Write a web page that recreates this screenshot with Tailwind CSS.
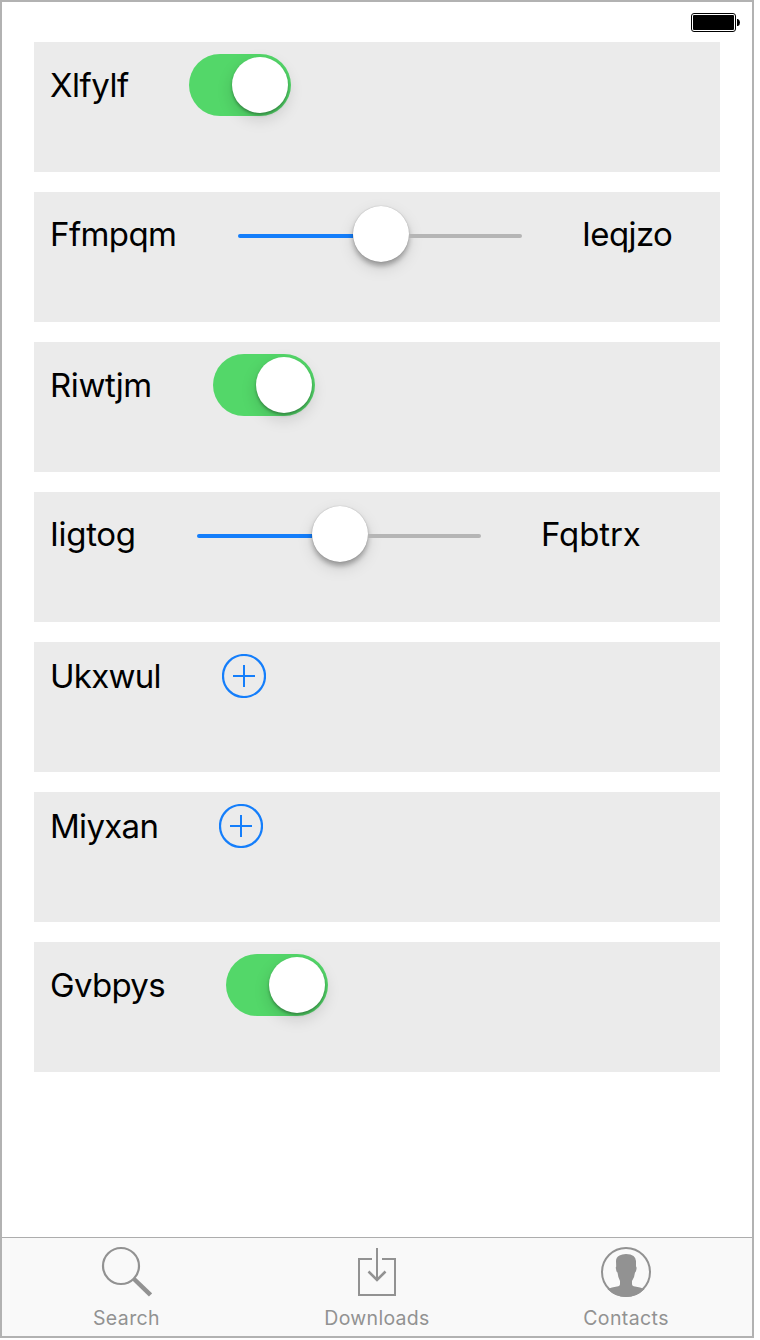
<!DOCTYPE html>
<html lang="en">
<head>
<meta charset="utf-8">
<title>Controls</title>
<script src="https://cdn.jsdelivr.net/npm/@tailwindcss/browser@4"></script>
</head>
<body class="bg-white text-black font-['Inter','Liberation_Sans',sans-serif]">
<div class="w-[754px] h-[1338px] border-2 border-[#b2b2b2] bg-white flex flex-col overflow-hidden">
  <header class="h-10 shrink-0 flex justify-end pt-[11px] pr-3">
    <svg width="49" height="19" viewBox="0 0 49 19"><rect x=".5" y=".5" width="44" height="18" rx="2.5" fill="#fff" stroke="#000"/><rect x="2" y="2" width="41" height="15" rx="1" fill="#000"/><path d="M46 6h1q2 1 2 3.500t-2 3.500h-1z" fill="#000"/></svg>
  </header>
  <main class="flex-1 flex flex-col gap-5 px-8 text-[33px] leading-[40px] whitespace-nowrap">
    <section class="h-[130px] w-[686px] bg-[#ebebeb] pl-4 pt-3">
      <div class="flex items-center h-[62px]">
        <span class="w-[139px]"><span class="tracking-[-0.5px]">Xlfylf</span></span>
        <div class="w-[102px] h-[62px] rounded-full bg-[#53d769] flex justify-end p-[3px]"><div class="size-14 rounded-full bg-white shadow-[0_6px_16px_rgba(0,0,0,0.15),0_2px_3px_rgba(0,0,0,0.3)]"></div></div>
      </div>
    </section>
    <section class="h-[130px] w-[686px] bg-[#ebebeb] pl-4 pt-3">
      <div class="flex items-center h-[60px]">
        <span class="w-[188px]"><span class="tracking-[-0.6px]">Ffmpqm</span></span>
        <div class="flex items-center w-[284px]"><div class="w-[115px] h-1 mt-1 rounded-l-full bg-[#147efb]"></div><div class="size-14 rounded-full bg-white shadow-[0_6px_16px_rgba(0,0,0,0.13),0_4px_5px_rgba(0,0,0,0.28),0_0_1px_rgba(0,0,0,0.3)]"></div><div class="flex-1 h-1 mt-1 rounded-r-full bg-[#b5b5b5]"></div></div>
        <span class="ml-[60px]"><span class="tracking-[-0.6px]">Ieqjzo</span></span>
      </div>
    </section>
    <section class="h-[130px] w-[686px] bg-[#ebebeb] pl-4 pt-3">
      <div class="flex items-center h-[62px]">
        <span class="w-[163px]"><span class="tracking-[-0.4px]">Riwtjm</span></span>
        <div class="w-[102px] h-[62px] rounded-full bg-[#53d769] flex justify-end p-[3px]"><div class="size-14 rounded-full bg-white shadow-[0_6px_16px_rgba(0,0,0,0.15),0_2px_3px_rgba(0,0,0,0.3)]"></div></div>
      </div>
    </section>
    <section class="h-[130px] w-[686px] bg-[#ebebeb] pl-4 pt-3">
      <div class="flex items-center h-[60px]">
        <span class="w-[147px]"><span class="tracking-[-0.3px]">Iigtog</span></span>
        <div class="flex items-center w-[284px]"><div class="w-[115px] h-1 mt-1 rounded-l-full bg-[#147efb]"></div><div class="size-14 rounded-full bg-white shadow-[0_6px_16px_rgba(0,0,0,0.13),0_4px_5px_rgba(0,0,0,0.28),0_0_1px_rgba(0,0,0,0.3)]"></div><div class="flex-1 h-1 mt-1 rounded-r-full bg-[#b5b5b5]"></div></div>
        <span class="ml-[60px]"><span class="tracking-[-0.1px]">Fqbtrx</span></span>
      </div>
    </section>
    <section class="h-[130px] w-[686px] bg-[#ebebeb] pl-4 pt-3">
      <div class="flex items-center h-11">
        <span class="w-[172px]"><span class="tracking-[-0.75px]">Ukxwul</span></span>
        <svg width="44" height="44" viewBox="0 0 44 44" fill="none" stroke="#147efb" stroke-width="2"><circle cx="22" cy="22" r="21" stroke-width="2.200"/><path d="M11 22h22M22 11v22"/></svg>
      </div>
    </section>
    <section class="h-[130px] w-[686px] bg-[#ebebeb] pl-4 pt-3">
      <div class="flex items-center h-11">
        <span class="w-[169px]"><span class="tracking-[-0.7px]">Miyxan</span></span>
        <svg width="44" height="44" viewBox="0 0 44 44" fill="none" stroke="#147efb" stroke-width="2"><circle cx="22" cy="22" r="21" stroke-width="2.200"/><path d="M11 22h22M22 11v22"/></svg>
      </div>
    </section>
    <section class="h-[130px] w-[686px] bg-[#ebebeb] pl-4 pt-3">
      <div class="flex items-center h-[62px]">
        <span class="w-[176px]"><span class="tracking-[-0.7px]">Gvbpys</span></span>
        <div class="w-[102px] h-[62px] rounded-full bg-[#53d769] flex justify-end p-[3px]"><div class="size-14 rounded-full bg-white shadow-[0_6px_16px_rgba(0,0,0,0.15),0_2px_3px_rgba(0,0,0,0.3)]"></div></div>
      </div>
    </section>
  </main>
  <nav class="h-[99px] shrink-0 border-t border-[#adadad] bg-[#f9f9f9] grid grid-cols-3 text-[19.5px] leading-6 text-[#929292]">
    <a class="w-[250px] pr-0.5 flex flex-col items-center pt-2">
      <svg width="52" height="52" viewBox="0 0 52 52" fill="none" stroke="#929292"><circle cx="21" cy="20" r="18" stroke-width="2.200"/><path d="M34 33L50.500 49" stroke-width="4.500"/></svg>
      <span class="mt-2 pl-px tracking-[0.4px]">Search</span>
    </a>
    <a class="w-[250px] flex flex-col items-center pt-2">
      <svg width="52" height="52" viewBox="0 0 52 52" fill="none" stroke="#929292" stroke-width="2"><path d="M21 13H8v36h36V13H31M26 2v33"/><path d="M17.500 25.500l8.500 8.500 8.500-8.500" stroke-width="2.500"/></svg>
      <span class="mt-2 tracking-[0.3px]">Downloads</span>
    </a>
    <a class="w-[250px] pr-0.5 flex flex-col items-center pt-2">
      <svg width="52" height="52" viewBox="0 0 52 52"><circle cx="26" cy="26" r="24" fill="none" stroke="#929292" stroke-width="2"/><path d="M16 15Q16 11 19.500 9.500 22 8 26 8q5 0 7.500 2Q36 12 36 15V20.500q.8.500.500 2.500-.5 3-1.500 3.500-.5 5-3 8.500v3q0 2 3 2.500l5 1L44.500 43Q37 51 26 51T7.500 43L12 41.500l5-1q3-.5 3-2.500V35q-2-3.500-2.500-8.500-1.200-.5-1.500-3.500-.5-2 .2-2.500z" fill="#929292"/></svg>
      <span class="mt-2 tracking-[0.4px]">Contacts</span>
    </a>
  </nav>
</div>
</body>
</html>
